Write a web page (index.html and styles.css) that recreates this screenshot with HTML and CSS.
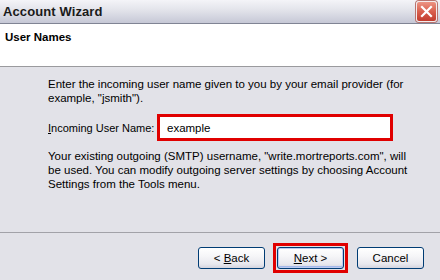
FILE: index.html
```html
<!DOCTYPE html>
<html>
<head>
<meta charset="utf-8">
<link rel="stylesheet" href="styles.css">
</head>
<body>
<div class="window">
  <div class="titlebar">
    <span class="title">Account Wizard</span>
    <span class="close">
      <svg width="19" height="19" viewBox="0 0 19 19"><path d="M5 5 L14 14 M14 5 L5 14" stroke="#fff" stroke-width="2.2" stroke-linecap="square"/></svg>
    </span>
  </div>
  <div class="header">User Names</div>
  <div class="content">
    <p class="para">Enter the incoming user name given to you by your email provider (for<br>example, "jsmith").</p>
    <div class="row">
      <label class="label"><u>I</u>ncoming User Name:</label>
      <div class="input">example</div>
    </div>
    <p class="para">Your existing outgoing (SMTP) username, "write.mortreports.com", will<br>be used. You can modify outgoing server settings by choosing Account<br>Settings from the Tools menu.</p>
  </div>
  <div class="footer">
    <button class="btn">&lt; <u>B</u>ack</button>
    <span class="focus-ring"><button class="btn btn-next"><u>N</u>ext &gt;</button></span>
    <button class="btn">Cancel</button>
  </div>
</div>
</body>
</html>
```
FILE: styles.css
```css
html, body {
  margin: 0;
  padding: 0;
}
body {
  width: 440px;
  height: 280px;
  overflow: hidden;
  font-family: "Liberation Sans", Arial, sans-serif;
  font-size: 11.5px;
  color: #000;
}
.window {
  display: flex;
  flex-direction: column;
  height: 280px;
}
.titlebar {
  height: 23px;
  border-bottom: 1px solid #808494;
  background: linear-gradient(#f4f4f8 0%, #e2e3ea 45%, #c6c8d6 100%);
  display: flex;
  align-items: center;
  justify-content: space-between;
  padding: 0 3px 0 3px;
}
.title {
  font-family: "Liberation Sans", Arial, sans-serif;
  font-weight: bold;
  font-size: 13px;
  color: #1a1a1a;
  letter-spacing: 0.1px;
}
.close {
  width: 19px;
  height: 19px;
  margin-top: -1px;
  border: 1px solid #f4ecec;
  border-radius: 3px;
  background: linear-gradient(#ec9484 0%, #d9604e 50%, #c23c2e 100%);
  box-shadow: 0 0 0 1px #b87470;
  display: flex;
  align-items: center;
  justify-content: center;
  overflow: hidden;
}
.close svg {
  display: block;
  flex: none;
}
.header {
  height: 43px;
  background: #fff;
  border-bottom: 1px solid #9a9a9e;
  box-sizing: border-box;
  padding: 7px 5px 0;
  font-family: "Liberation Sans", Arial, sans-serif;
  font-weight: bold;
  font-size: 11.5px;
}
.content {
  flex: 1;
  background: #e2e2e8;
  border-bottom: 1px solid #a2a2a8;
  padding: 10px 0 0 48px;
}
.para {
  margin: 0;
  line-height: 14px;
  white-space: nowrap;
}
.row {
  display: flex;
  align-items: center;
  margin: 9px 0 8px;
}
.label {
  flex: none;
  width: 109px;
  white-space: nowrap;
  font-size: 11px;
}
.input {
  flex: none;
  height: 21px;
  border: 3px solid #e00000;
  background: #fff;
  padding-left: 7px;
  box-sizing: content-box;
  display: flex;
  align-items: center;
  width: 223px;
}
.footer {
  height: 47px;
  background: #e2e2e8;
  display: flex;
  justify-content: flex-end;
  align-items: center;
  padding: 3px 16px 0 0;
  box-sizing: border-box;
}
.btn {
  width: 67px;
  height: 22px;
  box-sizing: border-box;
  border: 1px solid #003c74;
  border-radius: 3px;
  background: linear-gradient(#ffffff 0%, #f6f6f8 40%, #e8e8ee 80%, #d4d4de 100%);
  font-family: "Liberation Sans", Arial, sans-serif;
  font-size: 11.5px;
  color: #000;
  padding: 0;
  display: block;
}
.focus-ring {
  display: block;
  border: 3px solid #e00000;
  padding: 1px;
  margin: 0 9px 0 8px;
}
.btn-next {
  box-shadow: inset 0 0 0 1px #bccbf2, inset 0 -1px 0 1px #a4b8ea;
}
```
